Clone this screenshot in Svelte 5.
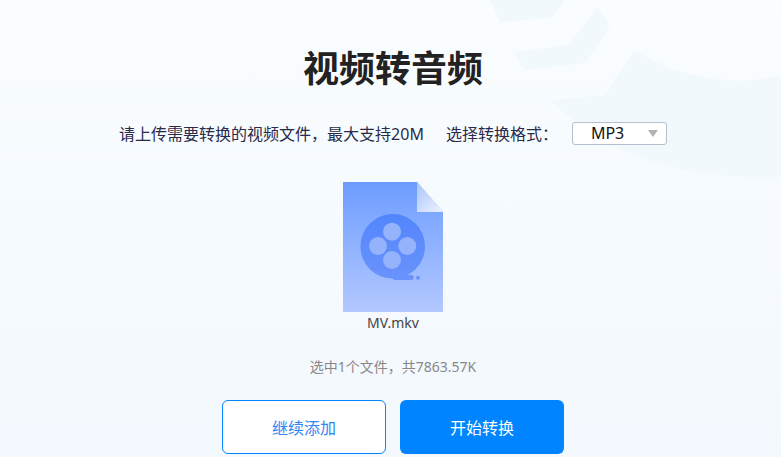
<script>
	let format = 'MP3';
	const file = { name: 'MV.mkv', size: '7863.57K' };
</script>

<div class="page">
	<svg class="decor" viewBox="0 0 781 457" width="781" height="457" aria-hidden="true">
		<path d="M490 0L500 23L553 17L565 0Z" />
		<path d="M513 52L525 70L585 63L610 26L597 7L569 45Z" />
		<path d="M634 50C680 78 735 88 781 75V177C690 180 610 160 550 100L605 95Z" />
	</svg>

	<main class="content">
		<h1>视频转音频</h1>

		<div class="options">
			<span>请上传需要转换的视频文件，最大支持20M</span>
			<span class="format-label">选择转换格式：</span>
			<div class="select">
				<span>{format}</span>
				<i class="arrow"></i>
			</div>
		</div>

		<div class="file">
			<svg viewBox="0 0 100 130" width="100" height="130" aria-hidden="true">
				<defs>
					<linearGradient id="body" x1="0" y1="0" x2="0" y2="1">
						<stop offset="0" stop-color="#6d9dff" />
						<stop offset="1" stop-color="#b3c8ff" />
					</linearGradient>
					<linearGradient id="fold" x1="0" y1="0" x2="1" y2="1">
						<stop offset="0" stop-color="#a9c4fb" />
						<stop offset="1" stop-color="#eef4ff" />
					</linearGradient>
					<linearGradient id="reel" gradientUnits="userSpaceOnUse" x1="0" y1="32" x2="0" y2="98">
						<stop offset="0" stop-color="#5285fd" />
						<stop offset="1" stop-color="#6a93fc" />
					</linearGradient>
				</defs>
				<path d="M0 0H74L100 30V130H0Z" fill="url(#body)" />
				<path d="M74 0L100 30H74Z" fill="url(#fold)" />
				<g fill="url(#reel)">
					<circle cx="49.700" cy="64.300" r="32.300" />
					<rect x="49.700" y="93" width="21" height="5" rx="2.500" />
				</g>
				<circle cx="75" cy="95.700" r="2" fill="#6a93fc" />
				<g fill="#95b3fd">
					<circle cx="49" cy="49.700" r="9" />
					<circle cx="49" cy="78" r="9" />
					<circle cx="35" cy="64" r="9" />
					<circle cx="64.300" cy="64" r="9" />
				</g>
			</svg>
			<div class="file-name">{file.name}</div>
		</div>

		<p class="summary">选中1个文件，共{file.size}</p>

		<div class="actions">
			<button class="secondary">继续添加</button>
			<button class="primary">开始转换</button>
		</div>
	</main>
</div>

<style>
	:global(body) {
		margin: 0;
	}
	.page {
		position: relative;
		width: 781px;
		height: 457px;
		overflow: hidden;
		background: linear-gradient(180deg, #f9fdff 0%, #f3f8fe 100%);
		font-family: 'Noto Sans', 'Noto Sans CJK SC', sans-serif;
	}
	.decor {
		position: absolute;
		top: 0;
		left: 0;
		fill: #f2f9fd;
	}
	.content {
		position: relative;
		display: flex;
		flex-direction: column;
		align-items: center;
		padding: 42px 0 0 5px;
	}
	h1 {
		margin: 0;
		font-size: 36px;
		line-height: 54px;
		font-weight: 700;
		color: #222;
	}
	.options {
		display: flex;
		align-items: center;
		height: 24px;
		margin-top: 25px;
		font-size: 16px;
		color: #2a2a4a;
	}
	.format-label {
		margin-left: 22px;
		width: 126px;
	}
	.select {
		position: relative;
		box-sizing: border-box;
		width: 95px;
		height: 23px;
		padding-left: 18px;
		border: 1px solid #b4c0d0;
		border-radius: 3px;
		background: #fff;
		color: #111;
		line-height: 21px;
	}
	.arrow {
		position: absolute;
		right: 8px;
		top: 7px;
		border-style: solid;
		border-width: 7px 5px 0;
		border-color: #b2b2b2 transparent transparent;
	}
	.file {
		display: flex;
		flex-direction: column;
		align-items: center;
		margin-top: 37px;
	}
	.file svg {
		display: block;
	}
	.file-name {
		font-size: 14px;
		line-height: 22px;
		color: #444;
	}
	.summary {
		margin: 22px 0 0;
		font-size: 14px;
		line-height: 22px;
		color: #888;
	}
	.actions {
		display: flex;
		gap: 14px;
		margin-top: 22px;
	}
	button {
		box-sizing: border-box;
		width: 164px;
		height: 54px;
		border-radius: 6px;
		font-family: inherit;
		font-size: 16px;
	}
	.secondary {
		border: 1px solid #0084ff;
		background: #fff;
		color: #2f86f6;
	}
	.primary {
		border: 0;
		background: #0084ff;
		color: #fff;
	}
</style>
